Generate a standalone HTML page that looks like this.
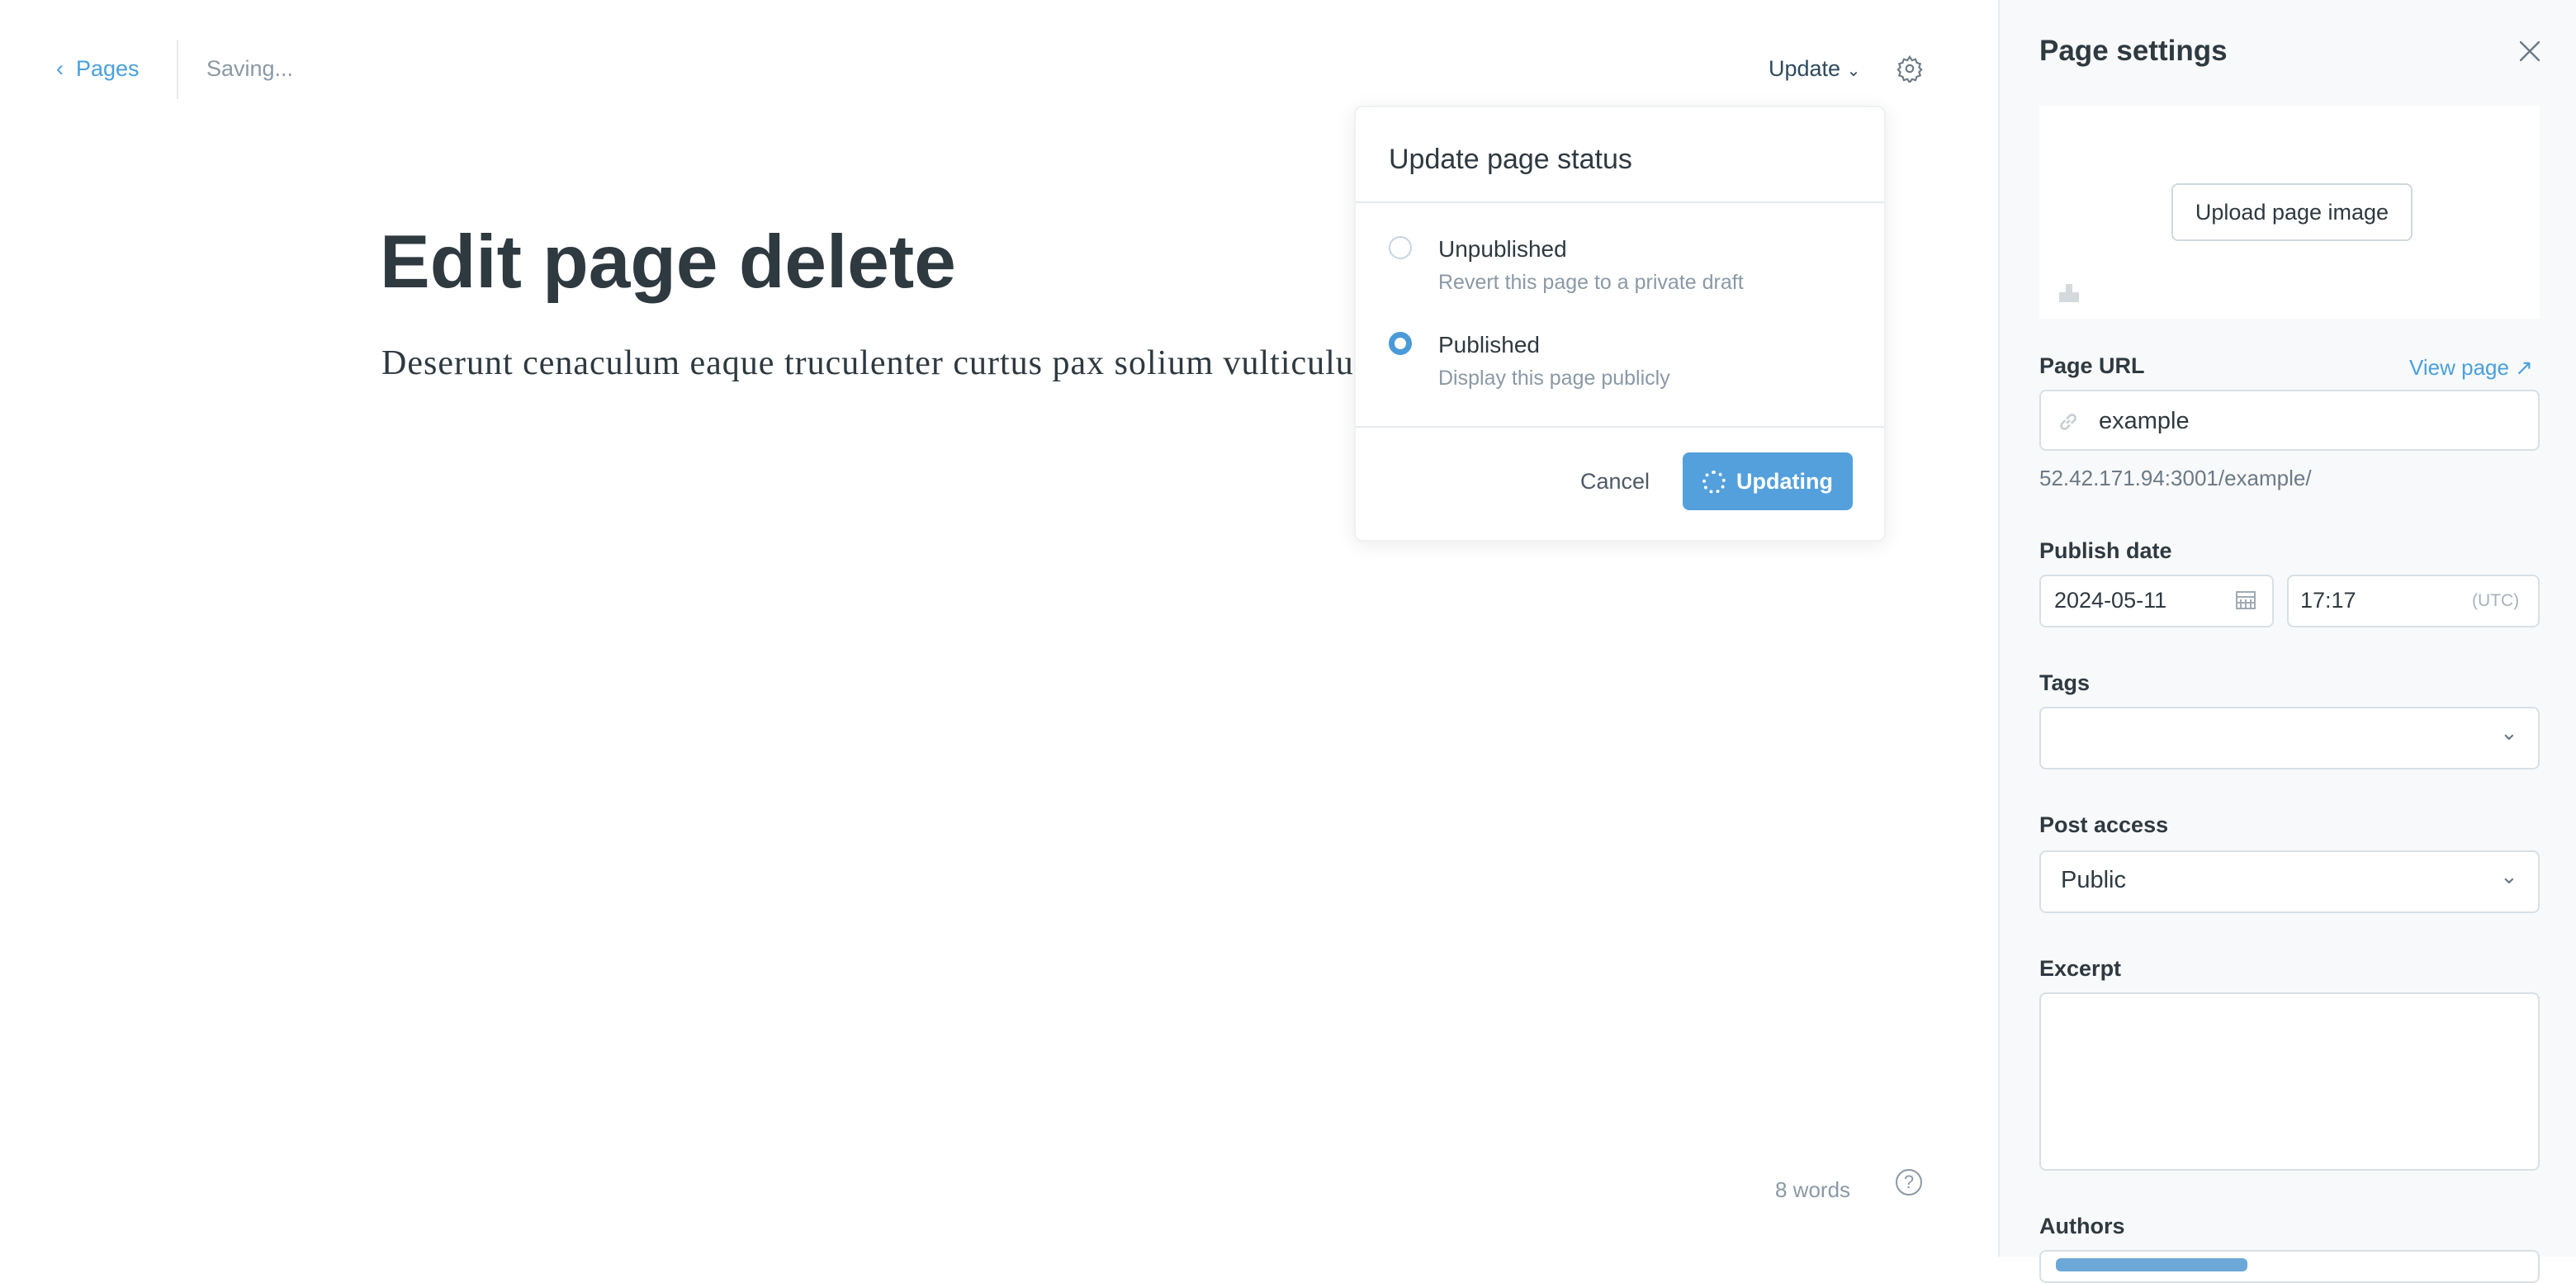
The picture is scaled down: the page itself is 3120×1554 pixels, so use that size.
<!DOCTYPE html>
<html><head><meta charset="utf-8"><style>
html{zoom:2}
body{margin:0;width:1560px;height:761px;overflow:hidden;background:#fff;font-family:"Liberation Sans",sans-serif;position:relative;color:#15212a}
.a{position:absolute}
.side{left:1210px;top:0;width:350px;height:761px;background:#f8f9fa;border-left:1px solid #e5eaee}
.lbl{font-size:13.5px;font-weight:bold;color:#2e3940}
.inp{background:#fff;border:1px solid #d8e0e6;border-radius:4px;box-sizing:border-box}
.muted{color:#8a99a5}
</style></head><body>
<div class="a" style="left:34px;top:34px;font-size:13.5px;color:#4aa0dc">&#8249;&nbsp; Pages</div>
<div class="a" style="left:107px;top:24px;width:1px;height:36px;background:#e5eaee"></div>
<div class="a muted" style="left:125px;top:34px;font-size:13.5px">Saving...</div>
<div class="a" style="left:1071px;top:34px;font-size:13.5px;color:#2e4a5e">Update <span style="font-size:10px">&#8964;</span></div>
<svg class="a" style="left:1148px;top:33px" width="17" height="17" viewBox="0 0 24 24" fill="none" stroke="#6c7a86" stroke-width="1.5"><circle cx="12" cy="12" r="3"/><path d="M12 2l2 3 3-1 1 3 3 1-1 3 2 2-2 2 1 3-3 1-1 3-3-1-2 3-2-3-3 1-1-3-3-1 1-3-2-2 2-2-1-3 3-1 1-3 3 1z"/></svg>
<div class="a" style="left:230px;top:133px;font-size:45.5px;font-weight:bold;color:#2e3940">Edit page delete</div>
<div class="a" style="left:231px;top:208px;font-size:21px;letter-spacing:0.5px;font-family:'Liberation Serif',serif;color:#2e3940;white-space:nowrap">Deserunt cenaculum eaque truculenter curtus pax solium vulticulu</div>
<div class="a muted" style="left:1075px;top:713px;font-size:13px">8 words</div>
<div class="a" style="left:1148px;top:708px;width:14px;height:14px;border:1.3px solid #8a99a5;border-radius:50%;font-size:11px;color:#8a99a5;text-align:center;line-height:14px">?</div>

<div class="a" style="left:820px;top:64px;width:320px;height:262px;background:#fff;border:1px solid #eef1f3;border-radius:5px;box-shadow:0 2px 12px rgba(0,0,0,.08)">
 <div class="a" style="left:20px;top:22px;font-size:17px;color:#2e3940">Update page status</div>
 <div class="a" style="left:0;top:57px;width:320px;height:1px;background:#e5eaee"></div>
 <div class="a" style="left:20px;top:78px;width:12px;height:12px;border:1.3px solid #c5d5e3;border-radius:50%"></div>
 <div class="a" style="left:50px;top:78px;font-size:14px;color:#2e3940">Unpublished</div>
 <div class="a muted" style="left:50px;top:99px;font-size:12.5px">Revert this page to a private draft</div>
 <div class="a" style="left:20px;top:136px;width:7px;height:7px;border:3.5px solid #4a9ad8;border-radius:50%;background:#fff"></div>
 <div class="a" style="left:50px;top:136px;font-size:14px;color:#2e3940">Published</div>
 <div class="a muted" style="left:50px;top:157px;font-size:12.5px">Display this page publicly</div>
 <div class="a" style="left:0;top:193px;width:320px;height:1px;background:#e5eaee"></div>
 <div class="a" style="left:136px;top:219px;font-size:13.5px;color:#4d5a66">Cancel</div>
 <div class="a" style="left:198px;top:209px;width:103px;height:35px;background:#54a0dc;border-radius:4px;color:#fff;font-size:13.5px;font-weight:bold;line-height:35px;text-align:right;box-sizing:border-box;padding-right:12px">Updating</div>
 <div class="a" style="left:210px;top:220px;width:10px;height:10px;border:2px dotted #fff;border-radius:50%"></div>
</div>

<div class="a side">
 <div class="a" style="left:24px;top:21px;font-size:17.5px;font-weight:bold;color:#2e3940">Page settings</div>
 <svg class="a" style="left:315px;top:25px" width="12" height="12" viewBox="0 0 12 12" stroke="#6c7a86" stroke-width="1.2"><path d="M0 0L12 12M12 0L0 12"/></svg>
 <div class="a" style="left:24px;top:64px;width:303px;height:129px;background:#fff"></div>
 <div class="a inp" style="left:104px;top:111px;width:146px;height:35px;border-color:#cfd8de;font-size:13.5px;color:#2e3940;text-align:center;line-height:33px">Upload page image</div>
 <svg class="a" style="left:35px;top:170px" width="14" height="14" viewBox="0 0 14 14" fill="#d4d9dd"><rect x="5" y="2" width="4" height="5"/><rect x="1" y="7" width="12" height="6"/></svg>
 <div class="a lbl" style="left:24px;top:214px">Page URL</div>
 <div class="a" style="left:248px;top:215px;font-size:13px;color:#4aa0dc">View page &#8599;</div>
 <div class="a inp" style="left:24px;top:236px;width:303px;height:37px"></div>
 <svg class="a" style="left:35px;top:249px" width="13" height="13" viewBox="0 0 14 14" fill="none" stroke="#c5cdd3" stroke-width="1.4"><path d="M6 8l2-2M5 6L3 8a2 2 0 003 3l2-2M9 8l2-2a2 2 0 00-3-3L6 5"/></svg>
 <div class="a" style="left:60px;top:247px;font-size:14.5px;color:#2e3940">example</div>
 <div class="a" style="left:24px;top:282px;font-size:13px;color:#6c7a86">52.42.171.94:3001/example/</div>
 <div class="a lbl" style="left:24px;top:326px">Publish date</div>
 <div class="a inp" style="left:24px;top:348px;width:142px;height:32px"></div>
 <div class="a" style="left:33px;top:356px;font-size:13.5px;color:#2e3940">2024-05-11</div>
 <svg class="a" style="left:143px;top:357px" width="12" height="12" viewBox="0 0 12 12" fill="none" stroke="#a0abb4"><rect x="0.5" y="1.5" width="11" height="10"/><path d="M0.5 4.5h11M3 6v5M6 6v5M9 6v5M0.5 8h11"/></svg>
 <div class="a inp" style="left:174px;top:348px;width:153px;height:32px"></div>
 <div class="a" style="left:182px;top:356px;font-size:13.5px;color:#2e3940">17:17</div>
 <div class="a" style="left:286px;top:358px;font-size:10.5px;color:#a7b2ba">(UTC)</div>
 <div class="a lbl" style="left:24px;top:406px">Tags</div>
 <div class="a inp" style="left:24px;top:428px;width:303px;height:38px"></div>
 <div class="a" style="left:303px;top:436px;font-size:13px;color:#6c7a86">&#8964;</div>
 <div class="a lbl" style="left:24px;top:492px">Post access</div>
 <div class="a inp" style="left:24px;top:515px;width:303px;height:38px"></div>
 <div class="a" style="left:37px;top:525px;font-size:14.5px;color:#2e3940">Public</div>
 <div class="a" style="left:303px;top:523px;font-size:13px;color:#6c7a86">&#8964;</div>
 <div class="a lbl" style="left:24px;top:579px">Excerpt</div>
 <div class="a inp" style="left:24px;top:601px;width:303px;height:108px"></div>
 <div class="a lbl" style="left:24px;top:735px">Authors</div>
 <div class="a inp" style="left:24px;top:757px;width:303px;height:20px"></div>
 <div class="a" style="left:34px;top:762px;width:116px;height:8px;background:#6ca8d8;border-radius:3px"></div>
</div>
</body></html>
